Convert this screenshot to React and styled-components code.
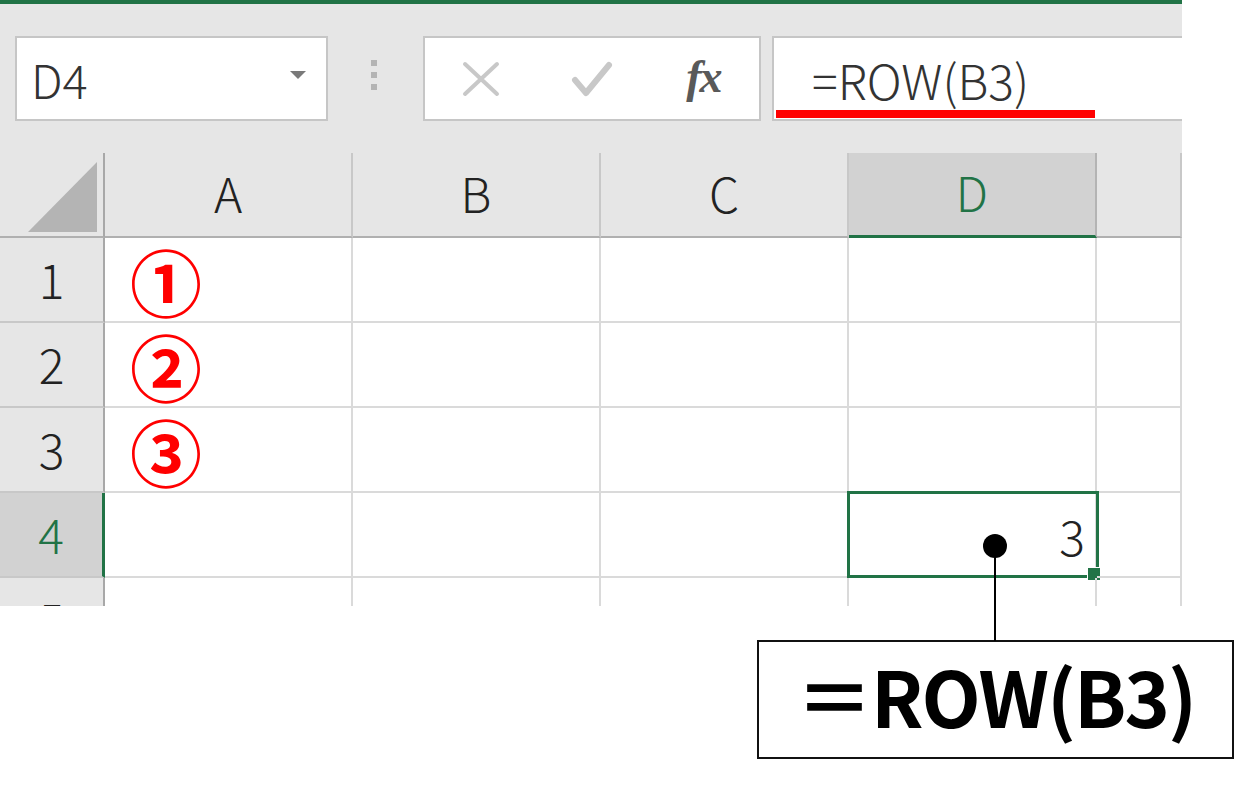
import styled, { createGlobalStyle } from "styled-components"

const GlobalStyle = createGlobalStyle`
  html, body {
    margin: 0;
    padding: 0;
    background: #fff;
  }
  body {
    font-family: "Noto Sans CJK JP", "Noto Sans", sans-serif;
  }
`

const Page = styled.div`
  position: relative;
  width: 1240px;
  height: 788px;
  overflow: hidden;
`

const Sheet = styled.div`
  width: 1182px;
  height: 606px;
  overflow: hidden;
  background: #e6e6e6;
  border-top: 4px solid #217346;
  box-sizing: border-box;
  font-weight: 300;
`

const FormulaArea = styled.div`
  display: flex;
  align-items: center;
  height: 149px;
  padding: 0 0 0 15px;
  box-sizing: border-box;
`

const Box = styled.div`
  height: 85px;
  box-sizing: border-box;
  background: #fff;
  border: 2px solid #c6c6c6;
  display: flex;
  align-items: center;
`

const NameBox = styled(Box)`
  width: 313px;
  padding: 0 20px 0 14px;
  justify-content: space-between;
  font-size: 47px;
  color: #333;
`

const Caret = styled.span`
  width: 0;
  height: 0;
  border-left: 8px solid transparent;
  border-right: 8px solid transparent;
  border-top: 8px solid #7a7a7a;
  margin-top: -8px;
`

const Grip = styled.div`
  display: flex;
  flex-direction: column;
  gap: 6px;
  margin: -8px 46px 0 43px;
  span {
    width: 6px;
    height: 6px;
    background: #b4b4b4;
  }
`

const ButtonBox = styled(Box)`
  width: 338px;
`

const Slot = styled.div`
  width: 112px;
  height: 100%;
  display: flex;
  align-items: center;
  justify-content: center;
`

const Fx = styled.span`
  font-family: "Liberation Serif", "DejaVu Serif", serif;
  font-style: italic;
  font-weight: bold;
  font-size: 46px;
  color: #595959;
  letter-spacing: -2px;
  margin-top: -4px;
`

const FormulaInput = styled(Box)`
  position: relative;
  flex: 1;
  margin-left: 11px;
  border-right: none;
  padding-left: 38px;
  font-size: 48px;
  color: #333;
`

const RedLine = styled.span`
  position: absolute;
  left: 2px;
  top: 72px;
  width: 319px;
  height: 8px;
  background: #ff0000;
`

const Grid = styled.div`
  display: grid;
  grid-template-columns: 105px repeat(4, 248px) 1fr;
  grid-template-rows: repeat(6, 85px);
  background: #fff;
`

const ColHead = styled.div`
  display: flex;
  align-items: center;
  justify-content: center;
  box-sizing: border-box;
  font-size: 48px;
  padding-bottom: 6px;
  background: ${(p) => (p.$active ? "#d2d2d2" : "#e6e6e6")};
  color: ${(p) => (p.$active ? "#217346" : "#222")};
  border-right: 2px solid ${(p) => (p.$active ? "#b4b4b4" : "#c8c8c8")};
  border-bottom: ${(p) => (p.$active ? "3px solid #217346" : "2px solid #b0b0b0")};
  &:last-child {
    border-right: none;
  }
`

const Corner = styled(ColHead)`
  position: relative;
  border-right: 2px solid #a8a8a8;
  svg {
    position: absolute;
    left: 28px;
    top: 9px;
  }
`

const RowHead = styled.div`
  display: flex;
  align-items: center;
  justify-content: center;
  box-sizing: border-box;
  font-size: 48px;
  padding-bottom: 4px;
  background: ${(p) => (p.$active ? "#d2d2d2" : "#e6e6e6")};
  color: ${(p) => (p.$active ? "#217346" : "#222")};
  border-bottom: 2px solid #c8c8c8;
  border-right: ${(p) => (p.$active ? "3px solid #217346" : "2px solid #a8a8a8")};
`

const Cell = styled.div`
  position: relative;
  display: flex;
  align-items: center;
  justify-content: ${(p) => (p.$right ? "flex-end" : "flex-start")};
  box-sizing: border-box;
  border-right: 2px solid #dadada;
  border-bottom: 2px solid #dadada;
  padding: 0 10px 0 24px;
  font-size: 48px;
  color: #222;
`

const Circled = styled.span`
  color: #ff0000;
  font-size: 72px;
  font-weight: 700;
  line-height: 72px;
  margin-left: 1px;
`

const Selection = styled.span`
  position: absolute;
  left: -2px;
  top: -2px;
  right: -4px;
  bottom: -2px;
  border: 3px solid #217346;
  pointer-events: none;
`

const Handle = styled.span`
  position: absolute;
  right: -6px;
  bottom: -5px;
  width: 12px;
  height: 12px;
  background: #217346;
  border: 1px solid #fff;
`

const Dot = styled.span`
  position: absolute;
  left: 983px;
  top: 534px;
  width: 24px;
  height: 24px;
  border-radius: 50%;
  background: #000;
`

const Leader = styled.span`
  position: absolute;
  left: 994px;
  top: 546px;
  width: 2px;
  height: 95px;
  background: #000;
`

const Callout = styled.div`
  width: 477px;
  height: 119px;
  margin: 34px 0 0 757px;
  box-sizing: border-box;
  border: 2px solid #111;
  display: flex;
  align-items: center;
  justify-content: center;
  padding-bottom: 10px;
  font-size: 77px;
  font-weight: 700;
  letter-spacing: -2px;
  color: #000;
`

const cols = ["A", "B", "C", "D", ""]
const rows = [1, 2, 3, 4, 5]
const marks = { 1: "①", 2: "②", 3: "③" }

const Row = ({ r }) => (
  <>
    <RowHead $active={r === 4}>{r}</RowHead>
    {cols.map((c, i) => (
      <Cell key={i} $right={r === 4 && c === "D"}>
        {c === "A" && marks[r] && <Circled>{marks[r]}</Circled>}
        {r === 4 && c === "D" && (
          <>
            3
            <Selection />
            <Handle />
          </>
        )}
      </Cell>
    ))}
  </>
)

const App = () => {
  return (
    <Page>
      <GlobalStyle />
      <Sheet>
        <FormulaArea>
          <NameBox>
            <span>D4</span>
            <Caret />
          </NameBox>
          <Grip>
            <span />
            <span />
            <span />
          </Grip>
          <ButtonBox>
            <Slot>
              <svg width="38" height="36" viewBox="0 0 38 36">
                <path d="M3 3 L35 33 M35 3 L3 33" stroke="#c8c8c8" strokeWidth="4" strokeLinecap="round" />
              </svg>
            </Slot>
            <Slot>
              <svg width="42" height="38" viewBox="0 0 42 38">
                <path d="M4 20 L15 33 L38 5" stroke="#c8c8c8" strokeWidth="6" fill="none" strokeLinecap="round" strokeLinejoin="round" />
              </svg>
            </Slot>
            <Slot>
              <Fx>fx</Fx>
            </Slot>
          </ButtonBox>
          <FormulaInput>
            <span>=ROW(B3)</span>
            <RedLine />
          </FormulaInput>
        </FormulaArea>
        <Grid>
          <Corner>
            <svg width="70" height="70" viewBox="0 0 70 70">
              <polygon points="69,0 69,70 0,70" fill="#b4b4b4" />
            </svg>
          </Corner>
          {cols.map((c, i) => (
            <ColHead key={i} $active={c === "D"}>{c}</ColHead>
          ))}
          {rows.map((r) => (
            <Row key={r} r={r} />
          ))}
        </Grid>
      </Sheet>
      <Dot />
      <Leader />
      <Callout>＝ROW(B3)</Callout>
    </Page>
  )
}

export default App
